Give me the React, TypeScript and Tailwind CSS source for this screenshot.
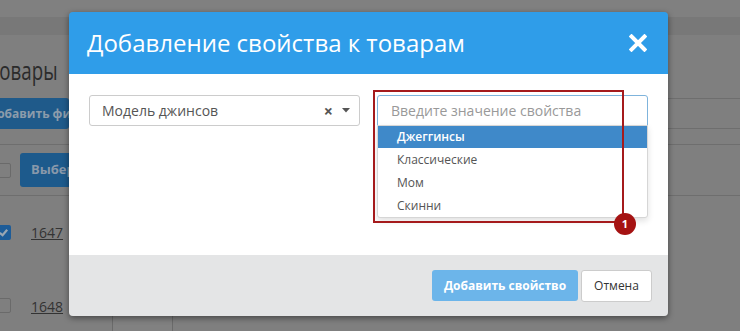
import React from "react";

export default function App() {
  return (
    <div
      className="relative w-[740px] h-[331px] overflow-hidden bg-[#7f7f7f]"
      style={{ fontFamily: '"Open Sans", "Noto Sans", sans-serif' }}
    >
      {/* dimmed page underneath */}
      <div className="h-[17px] bg-[#808080]" />
      <div className="h-[18px] bg-[#787878]" />
      <div className="h-[63px] flex items-center pt-[6px]">
        <span className="-ml-[11px] text-[26px] leading-none text-[#2b2b2b] scale-x-[0.72] origin-left inline-block">
          Товары
        </span>
      </div>
      <div className="h-[31px] flex">
        <div className="-ml-[14px] w-[83px] h-[31px] rounded-[3px] bg-[#1f5a8a] text-[#8c9cab] font-bold text-[12px] flex items-center whitespace-nowrap overflow-hidden pl-[2px]">
          Добавить фильтр
        </div>
        <div className="ml-auto w-[360px] border-y border-[#6e6e6e]" />
      </div>
      <div className="h-[16px] border-b border-[#6e6e6e]" />
      <div className="h-[51px] border-b border-[#6e6e6e] flex items-center">
        <div className="-ml-[4px] w-[15px] h-[15px] rounded-[2px] border border-[#6a6a6a] bg-[#7f7f7f]" />
        <div className="ml-[9px] h-[34px] px-[11px] rounded-[3px] bg-[#1d5a8c] text-[#8898aa] font-bold text-[13px] flex items-center">
          Выберите действие
        </div>
      </div>
      <div className="h-[73px] flex">
        <div className="w-[112px] flex items-center">
          <div className="-ml-[4px] w-[15px] h-[15px] rounded-[2px] bg-[#1d5c98] flex items-center justify-center">
            <svg width="11" height="11" viewBox="0 0 12 12">
              <path d="M2 6.5 L5 9 L10 3" fill="none" stroke="#9aa6b2" strokeWidth="2.4" />
            </svg>
          </div>
          <span className="ml-[20px] text-[14px] text-[#333] underline">1647</span>
        </div>
        <div className="w-[61px] border-x border-[#6a6a6a]" />
      </div>
      <div className="h-[62px] flex">
        <div className="w-[112px] flex items-start pt-[29px]">
          <div className="-ml-[4px] w-[15px] h-[15px] rounded-[2px] border border-[#6a6a6a] bg-[#7f7f7f]" />
          <span className="ml-[20px] -mt-[2px] text-[14px] text-[#333] underline">1648</span>
        </div>
        <div className="w-[61px] border-x border-[#6a6a6a] bg-[#818181]" />
      </div>

      {/* modal */}
      <div className="absolute left-[69px] top-[12px] w-[599px] rounded-[4px] shadow-[0_2px_6px_rgba(0,0,0,0.45)]">
        <div className="h-[62px] bg-[#2f9de9] rounded-t-[4px] flex items-center justify-between pl-[18px] pr-[21px]">
          <span className="text-[24px] leading-none text-white">Добавление свойства к товарам</span>
          <svg width="18" height="18" viewBox="0 0 18 18">
            <path d="M2.5 2.5 L15.5 15.5 M15.5 2.5 L2.5 15.5" stroke="#fff" strokeWidth="4" strokeLinecap="square" />
          </svg>
        </div>
        <div className="h-[181px] bg-white px-[20px] pt-[21px] flex gap-[17px]">
          <div className="w-[271px] h-[31px] border border-[#cccccc] rounded-[3px] flex items-center pl-[12px] pr-[9px] text-[14px] text-[#555]">
            <span>Модель джинсов</span>
            <span className="ml-auto text-[#555] font-bold text-[16px] leading-none">×</span>
            <svg className="ml-[9px]" width="8" height="5" viewBox="0 0 8 5">
              <path d="M0 0 L8 0 L4 4.5 Z" fill="#555" />
            </svg>
          </div>
          <div className="relative w-[271px]">
            <input
              readOnly
              placeholder="Введите значение свойства"
              className="w-full h-[31px] border border-[#7fb4dc] rounded-t-[3px] px-[13px] text-[14px] text-[#555] placeholder:text-[#999] outline-none"
            />
            <div className="absolute left-0 right-0 top-[30px] bg-white border border-[#d6d6d6] rounded-b-[3px] shadow-[0_3px_6px_rgba(0,0,0,0.12)] text-[12px] text-[#555]">
              <div className="h-[22px] bg-[#3f89c9] text-white font-semibold pl-[19px] flex items-center">Джеггинсы</div>
              <div className="h-[23px] pl-[19px] flex items-center">Классические</div>
              <div className="h-[23px] pl-[19px] flex items-center">Мом</div>
              <div className="h-[23px] pl-[19px] flex items-center">Скинни</div>
            </div>
            <div className="absolute -left-[4px] -top-[5px] w-[251px] h-[133px] border-2 border-[#a51a1c]" />
            <div className="absolute left-[237px] top-[118px] w-[22px] h-[22px] rounded-full bg-[#a51212] text-white text-[11px] font-bold flex items-center justify-center">
              1
            </div>
          </div>
        </div>
        <div className="h-[61px] bg-[#e4e5e6] rounded-b-[4px] flex items-center justify-end pr-[16px] gap-[3px]">
          <div className="w-[146px] h-[31px] rounded-[3px] bg-[#6cb5ea] text-white font-bold text-[12px] flex items-center justify-center">
            Добавить свойство
          </div>
          <div className="w-[71px] h-[32px] rounded-[3px] bg-white border border-[#cccccc] text-[#333] text-[12px] flex items-center justify-center">
            Отмена
          </div>
        </div>
      </div>
    </div>
  );
}
